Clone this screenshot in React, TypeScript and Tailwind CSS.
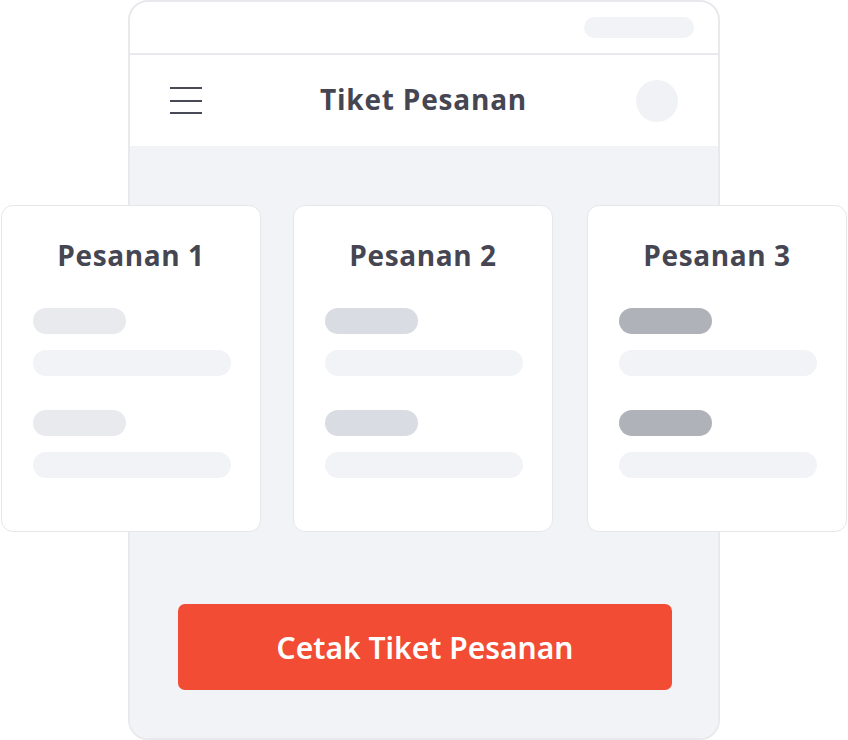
import React from "react";

const cards = [
  { title: "Pesanan 1", short: "bg-[#e9eaee]" },
  { title: "Pesanan 2", short: "bg-[#dadce3]" },
  { title: "Pesanan 3", short: "bg-[#b0b2ba]" },
];

function Card({ title, short }: { title: string; short: string }) {
  return (
    <div className="w-[260px] h-[327px] shrink-0 bg-white border border-[#e6e7eb] rounded-[12px] flex flex-col px-[31px]">
      <div className="mt-[33px] text-center text-[28px] font-bold text-[#454652] leading-[32px] tracking-[0.6px]" style={{ fontFamily: '"Open Sans", sans-serif' }}>
        {title}
      </div>
      <div className={`mt-[37px] w-[93px] h-[26px] rounded-full ${short}`} />
      <div className="mt-[16px] w-[198px] h-[26px] rounded-full bg-[#f2f3f6]" />
      <div className={`mt-[34px] w-[93px] h-[26px] rounded-full ${short}`} />
      <div className="mt-[16px] w-[198px] h-[26px] rounded-full bg-[#f2f3f6]" />
    </div>
  );
}

export default function App() {
  return (
    <div className="w-[848px] h-[740px] bg-white">
      <div className="ml-[128px] w-[592px] h-[740px] border-2 border-[#e8e9ed] rounded-[20px] flex flex-col overflow-visible">
        <div className="h-[53px] shrink-0 border-b-2 border-[#e8e9ed] flex items-start justify-end pr-[24px] pt-[15px]">
          <div className="w-[110px] h-[21px] rounded-full bg-[#f2f3f6]" />
        </div>
        <div className="h-[91px] shrink-0 bg-white flex items-center justify-between pl-[40px] pr-[40px]">
          <div className="flex flex-col gap-[10.5px] w-[32px]">
            <div className="h-[2px] bg-[#484a55]" />
            <div className="h-[2px] bg-[#484a55]" />
            <div className="h-[2px] bg-[#484a55]" />
          </div>
          <div className="text-[28px] font-bold text-[#454652] tracking-[0.8px] ml-[9px] mb-[4px]" style={{ fontFamily: '"Open Sans", sans-serif' }}>
            Tiket Pesanan
          </div>
          <div className="w-[42px] h-[42px] rounded-full bg-[#f1f2f6]" />
        </div>
        <div className="flex-1 bg-[#f2f3f7] rounded-b-[18px] flex flex-col">
          <div className="mt-[59px] ml-[-129px] w-[846px] flex">
            <Card title={cards[0].title} short={cards[0].short} />
            <div className="w-[32px] shrink-0" />
            <Card title={cards[1].title} short={cards[1].short} />
            <div className="w-[34px] shrink-0" />
            <Card title={cards[2].title} short={cards[2].short} />
          </div>
          <button className="mt-[72px] ml-[48px] w-[494px] h-[86px] rounded-[7px] bg-[#f24c34] text-white text-[30px] font-semibold" style={{ fontFamily: '"Noto Sans", sans-serif' }}>
            Cetak Tiket Pesanan
          </button>
        </div>
      </div>
    </div>
  );
}
